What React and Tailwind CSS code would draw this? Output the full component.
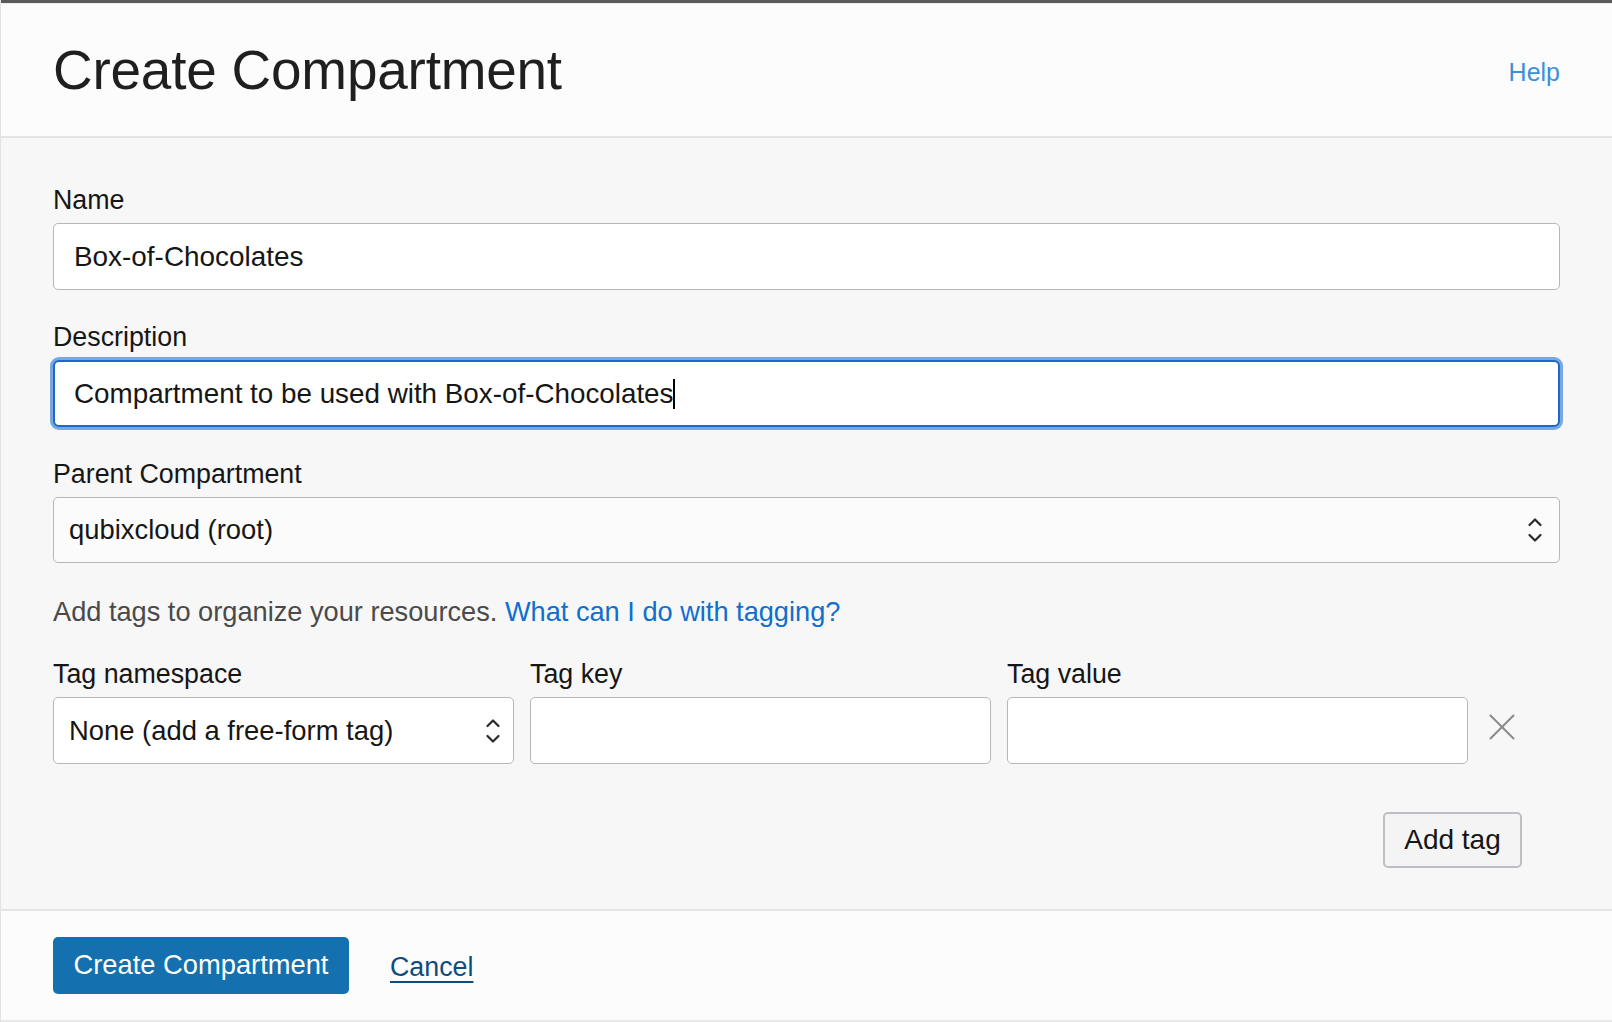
import React from 'react';

function Chevrons({ className = '' }) {
  return (
    <svg width="16" height="30" viewBox="0 0 16 30" className={className} fill="none" stroke="#2a2a2a" strokeWidth="2.2" strokeLinecap="round" strokeLinejoin="round">
      <path d="M2.5 10 L8 4.5 L13.5 10" />
      <path d="M2.5 20 L8 25.5 L13.5 20" />
    </svg>
  );
}

function Label({ children }) {
  return <div className="text-[26.8px] leading-[30px] text-[#161616]">{children}</div>;
}

export default function App() {
  return (
    <div className="w-full h-[1022px] flex flex-col bg-[#f7f7f7] border-l border-[#e3e3e3] font-['Liberation_Sans',Arial,sans-serif] overflow-hidden">
      <div className="h-[3px] bg-[#5b5b5b] shrink-0" />
      <div className="h-[1px] bg-[#e9eef2] shrink-0" />

      {/* header */}
      <div className="h-[134px] shrink-0 bg-[#fcfcfc] border-b-2 border-[#e4e4e4] px-[52px] flex items-center justify-between">
        <h1 className="text-[54.9px] leading-none text-[#1f1f1f] tracking-[-0.2px]">Create Compartment</h1>
        <a className="text-[25px] text-[#3b8fda] font-light pt-[6px]">Help</a>
      </div>

      {/* body */}
      <div className="flex-1 px-[52px] pt-[47px] flex flex-col">
        <Label>Name</Label>
        <div className="mt-2 h-[67px] bg-white border border-[#b3b8bd] rounded-[5px] flex items-center px-[20px] text-[27.9px] text-[#161616]">
          Box-of-Chocolates
        </div>

        <div className="mt-[32px]"><Label>Description</Label></div>
        <div className="mt-2 h-[67px] bg-white border-2 border-[#1a6acb] rounded-[6px] ring-[3px] ring-[#7aa7df] flex items-center px-[19px] text-[27.8px] text-[#161616]">
          Compartment to be used with Box-of-Chocolates
          <span className="inline-block w-[1.5px] h-[30px] bg-black" />
        </div>

        <div className="mt-[32px]"><Label>Parent Compartment</Label></div>
        <div className="mt-2 h-[66px] bg-[#fbfbfb] border border-[#b3b8bd] rounded-[5px] flex items-center justify-between pl-[15px] pr-[16px] text-[27.4px] text-[#161616]">
          <span>qubixcloud (root)</span>
          <Chevrons />
        </div>

        <div className="mt-[34px] text-[27.2px] leading-[30px] text-[#4a4a4a]">
          Add tags to organize your resources.{' '}
          <a className="text-[#0f6fce]">What can I do with tagging?</a>
        </div>

        <div className="mt-[32px] flex items-end">
          <div className="w-[461px] flex flex-col">
            <Label>Tag namespace</Label>
            <div className="mt-2 h-[67px] bg-white border border-[#b3b8bd] rounded-[5px] flex items-center justify-between pl-[15px] pr-[12px] text-[27.4px] text-[#161616]">
              <span>None (add a free-form tag)</span>
              <Chevrons />
            </div>
          </div>
          <div className="w-[461px] ml-4 flex flex-col">
            <Label>Tag key</Label>
            <div className="mt-2 h-[67px] bg-white border border-[#b3b8bd] rounded-[5px]" />
          </div>
          <div className="w-[461px] ml-4 flex flex-col">
            <Label>Tag value</Label>
            <div className="mt-2 h-[67px] bg-white border border-[#b3b8bd] rounded-[5px]" />
          </div>
          <div className="ml-[21px] h-[67px] flex items-start pt-[17px]">
            <svg width="26" height="26" viewBox="0 0 26 26" stroke="#8a8a8a" strokeWidth="2" strokeLinecap="round">
              <path d="M1.5 1.5 L24.5 24.5" />
              <path d="M24.5 1.5 L1.5 24.5" />
            </svg>
          </div>
        </div>

        <div className="mt-[48px] flex justify-end pr-[38px]">
          <button className="h-[56px] w-[139px] bg-[#f4f4f4] border-2 border-[#bcc0c4] rounded-[5px] text-[28px] text-[#161616]">
            Add tag
          </button>
        </div>
      </div>

      {/* footer */}
      <div className="h-[113px] shrink-0 bg-[#fcfcfc] border-t-2 border-[#e4e4e4] border-b-2 border-b-[#e8e8e8] px-[52px] flex items-center">
        <button className="h-[57px] w-[296px] bg-[#1470ae] rounded-[5px] text-white text-[27.3px]">
          Create Compartment
        </button>
        <a className="ml-[41px] pt-[3px] text-[26.8px] text-[#0e4c7e] underline underline-offset-[5px]">Cancel</a>
      </div>
    </div>
  );
}
